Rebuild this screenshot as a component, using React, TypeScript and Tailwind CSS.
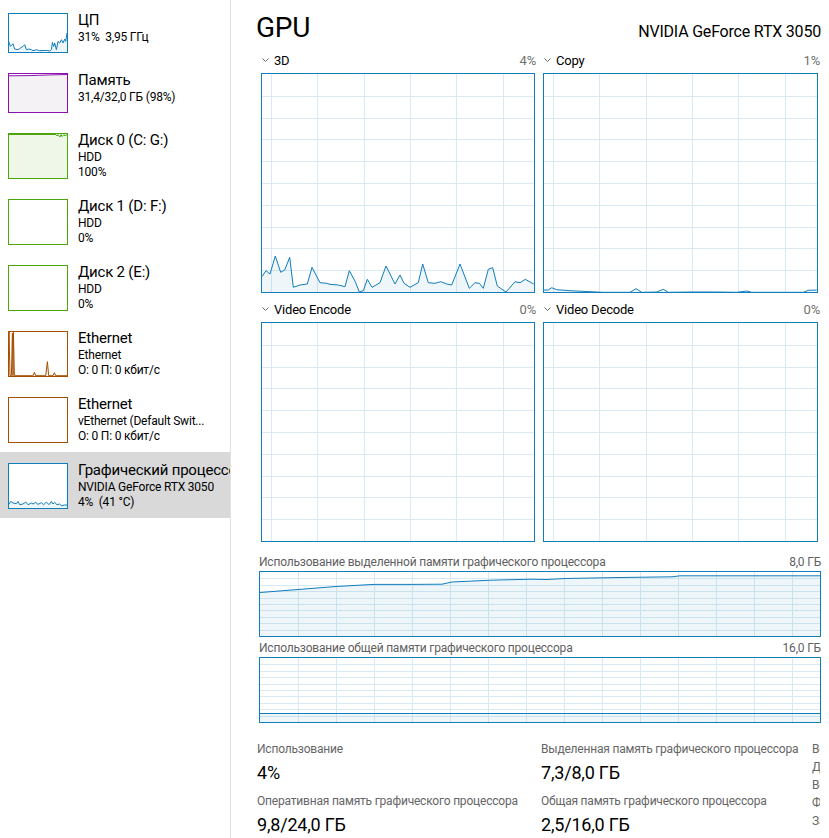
import React from 'react';
import clsx from 'clsx';

type Pt = [number, number];

const BLUE = '#117dbb';
const GRID = '#d9eaf4';

const toStr = (pts: Pt[]) => pts.map((p) => `${p[0].toFixed(1)},${p[1].toFixed(1)}`).join(' ');

// line + translucent area underneath
const Area = ({ pts, w, h, color, fill }: { pts: Pt[]; w: number; h: number; color: string; fill?: string }) => (
  <>
    <polygon points={`0,${h} ${toStr(pts)} ${w},${h}`} fill={fill ?? color} fillOpacity={fill ? 1 : 0.07} />
    <polyline points={toStr(pts)} fill="none" stroke={color} strokeWidth={1} strokeLinejoin="round" />
  </>
);

// chart with the light blue grid used on the GPU page
const Chart = ({ w, h, dx, ox, rows, pts }: { w: number; h: number; dx: number; ox: number; rows: number; pts?: Pt[] }) => {
  const vx: number[] = [];
  for (let x = ox; x < w; x += dx) vx.push(Math.round(x) + 0.5);
  const hy: number[] = [];
  for (let i = 1; i < rows; i++) hy.push(Math.round((h * i) / rows) + 0.5);
  return (
    <svg width={w} height={h} className="block">
      {vx.map((x) => (
        <line key={'v' + x} x1={x} x2={x} y1={0} y2={h} stroke={GRID} />
      ))}
      {hy.map((y) => (
        <line key={'h' + y} x1={0} x2={w} y1={y} y2={y} stroke={GRID} />
      ))}
      {pts && <Area pts={pts} w={w} h={h} color={BLUE} />}
    </svg>
  );
};

const Chevron = () => (
  <svg width="7" height="4" viewBox="0 0 7 4" className="ml-[3px] mt-[6px] shrink-0">
    <polyline points="0.5,0.5 3.5,3.5 6.5,0.5" fill="none" stroke="#6b6b6b" strokeWidth="1" />
  </svg>
);

// ---- data (traced from the screenshot) ----
const cpuPts: Pt[] = [[27,125],[32,140],[40,132],[45,148],[55,150],[62,145],[70,140],[75,135],[80,150],[88,148],[95,150],[100,153],[110,150],[120,153],[140,152],[150,154],[155,150],[158,128],[162,140],[165,130],[170,150],[175,125],[180,130],[185,120],[190,130],[195,118],[198,125],[202,100]]
  .map(([a, b]) => [a / 3 - 9.3, b / 3 - 14.3] as Pt);

const gpuThumbPts: Pt[] = [[27,555],[33,545],[40,550],[50,552],[55,545],[60,555],[70,553],[78,547],[85,555],[95,550],[100,553],[108,548],[115,554],[125,549],[132,555],[140,547],[148,555],[155,545],[160,553],[165,548],[172,555],[180,553],[185,558],[195,556],[202,556]]
  .map(([a, b]) => [a / 3 - 9.3, b / 3 - 144.3] as Pt);

const ethPts: Pt[] = [[25,167],[28,35],[31,167],[35,167],[38,40],[40,167],[41,35],[44,167],[100,167],[104,157],[108,167],[138,167],[143,125],[147,167],[160,167],[164,158],[168,167],[203,167]]
  .map(([a, b]) => [a / 3 - 9.3, b / 3 - 12] as Pt);

const memThumbPts: Pt[] = [[0, 1.8], [20, 1.6], [45, 0.8], [58, 0.5]];

const diskPts: Pt[] = [[0, 0.5], [47, 0.5], [48, 2], [49, 0.5], [51, 3], [52, 0.5], [53, 2.5], [55, 0.5], [56, 2], [58, 0.5]];

const d3Pts: Pt[] = [[35,110],[48,92],[60,102],[76,48],[92,97],[104,90],[119,52],[130,142],[150,135],[172,132],[186,82],[210,128],[230,130],[240,133],[265,135],[285,140],[298,92],[316,125],[328,156],[340,152],[352,118],[366,142],[390,128],[408,78],[435,132],[450,105],[462,130],[480,142],[505,128],[518,72],[535,128],[555,130],[572,125],[590,132],[605,135],[630,72],[658,145],[675,128],[688,130],[700,145],[715,88],[728,83],[742,138],[768,156],[795,125],[810,128],[826,118],[851,132]]
  .map(([a, b]) => [Math.max(0, a / 3 - 12), b / 3 + 166] as Pt);

const copyPts: Pt[] = [[40,150],[55,150],[65,143],[80,149],[120,152],[180,155],[220,157],[300,157],[318,146],[335,157],[380,156],[400,148],[415,157],[480,156],[560,156],[620,157],[650,153],[665,157],[735,157],[820,157],[835,151],[860,150]]
  .map(([a, b]) => [Math.max(0, a / 3 - 14), b / 3 + 166] as Pt);

const dedicatedPts: Pt[] = [[0,20.5],[38,17.5],[76,14.5],[114,12.4],[152,12.4],[182,12.2],[192,10],[231,8.2],[271,7.2],[287,7.5],[305,6.5],[360,5.5],[412,4.8],[420,3.8],[560,3.8]];

const sharedPts: Pt[] = [[0, 55.5], [560, 55.5]];

type Item = {
  title: string;
  lines: string[];
  border: string;
  color: string;
  fill?: string;
  tall: boolean;
  selected?: boolean;
  kind: 'cpu' | 'mem' | 'disk' | 'empty' | 'eth' | 'gpu';
};

const items: Item[] = [
  { title: 'ЦП', lines: ['31%  3,95 ГГц'], border: 'border-[#117dbb]', color: '#117dbb', tall: false, kind: 'cpu' },
  { title: 'Память', lines: ['31,4/32,0 ГБ (98%)'], border: 'border-[#8b12ae]', color: '#8b12ae', fill: '#f4f2f4', tall: false, kind: 'mem' },
  { title: 'Диск 0 (C: G:)', lines: ['HDD', '100%'], border: 'border-[#4da60c]', color: '#4da60c', fill: '#eff7e9', tall: true, kind: 'disk' },
  { title: 'Диск 1 (D: F:)', lines: ['HDD', '0%'], border: 'border-[#4da60c]', color: '#4da60c', tall: true, kind: 'empty' },
  { title: 'Диск 2 (E:)', lines: ['HDD', '0%'], border: 'border-[#4da60c]', color: '#4da60c', tall: true, kind: 'empty' },
  { title: 'Ethernet', lines: ['Ethernet', 'О: 0 П: 0 кбит/с'], border: 'border-[#a74f01]', color: '#a74f01', tall: true, kind: 'eth' },
  { title: 'Ethernet', lines: ['vEthernet (Default Swit...', 'О: 0 П: 0 кбит/с'], border: 'border-[#a74f01]', color: '#a74f01', tall: true, kind: 'empty' },
  { title: 'Графический процессор 0', lines: ['NVIDIA GeForce RTX 3050', '4%  (41 °C)'], border: 'border-[#117dbb]', color: '#117dbb', tall: true, selected: true, kind: 'gpu' },
];

const Thumb = ({ item }: { item: Item }) => {
  const w = 58;
  const h = item.tall ? 44 : 38;
  const pts: Record<string, Pt[] | undefined> = {
    cpu: cpuPts,
    gpu: gpuThumbPts,
    eth: ethPts,
    mem: memThumbPts,
    disk: diskPts,
  };
  const p = pts[item.kind];
  return (
    <div className={clsx('ml-[8px] mt-[11px] w-[60px] shrink-0 border bg-white', item.border, item.tall ? 'h-[46px]' : 'h-[40px]')}>
      <svg width={w} height={h} className="block">
        {p && <Area pts={p} w={w} h={h} color={item.color} fill={item.fill} />}
      </svg>
    </div>
  );
};

const SideItem = ({ item }: { item: Item }) => (
  <div className={clsx('flex', item.tall ? 'h-[66px]' : 'h-[60px]', item.selected && 'bg-[#d9d9d9]')}>
    <Thumb item={item} />
    <div className="ml-[10px] pt-[9px] whitespace-nowrap text-black">
      <div className="text-[15px] leading-[19px]">{item.title}</div>
      {item.lines.map((l, i) => (
        <div key={i} className="text-[12px] leading-[15px] whitespace-pre">
          {l}
        </div>
      ))}
    </div>
  </div>
);

const GraphCell = ({ name, value, wide, pts }: { name: string; value: string; wide?: boolean; pts?: Pt[] }) => (
  <div>
    <div className="flex h-[21px] items-start text-[13px] leading-[18px]">
      <Chevron />
      <span className="ml-[5px] text-black">{name}</span>
      <span className="ml-auto pr-[1px] text-[#707070]">{value}</span>
    </div>
    <div className={clsx('ml-[2px] h-[220px] border border-[#117dbb]', wide ? 'w-[275px]' : 'w-[274px]')}>
      <Chart w={wide ? 273 : 272} h={218} dx={46.4} ox={8.7} rows={10} pts={pts} />
    </div>
  </div>
);

const MemGraph = ({ label, value, pts }: { label: string; value: string; pts: Pt[] }) => (
  <div>
    <div className="flex h-[18px] justify-between text-[12px] leading-[18px] text-[#5f5f5f]">
      <span>{label}</span>
      <span>{value}</span>
    </div>
    <div className="h-[66px] border border-[#117dbb]">
      <Chart w={560} h={64} dx={38} ox={37.7} rows={10} pts={pts} />
    </div>
  </div>
);

const Stat = ({ label, value, first }: { label: string; value: string; first?: boolean }) => (
  <div className={first ? '' : 'mt-[8px]'}>
    <div className="text-[12px] leading-[16px] text-[#666666] whitespace-nowrap">{label}</div>
    <div className="mt-[4px] text-[18px] leading-[24px] text-black whitespace-nowrap">{value}</div>
  </div>
);

export default function App() {
  return (
    <div className="flex h-[838px] w-[829px] overflow-hidden bg-white font-['Roboto','Noto_Sans',sans-serif] tracking-[-0.2px]">
      <aside className="w-[231px] shrink-0 overflow-hidden border-r border-[#e3e3e3] pt-[2px]">
        {items.map((it, i) => (
          <SideItem key={i} item={it} />
        ))}
      </aside>

      <main className="min-w-0 flex-1 pl-[28px] pr-[8px]">
        <div className="mt-[14px] flex h-[28px] items-baseline justify-between">
          <span className="-ml-[3px] text-[28px] leading-[28px] text-black">GPU</span>
          <span className="text-[16px] leading-[20px] text-black">NVIDIA GeForce RTX 3050</span>
        </div>

        <div className="mt-[10px] grid grid-cols-[278px_280px] gap-x-[4px] gap-y-[8px]">
          <GraphCell name="3D" value="4%" pts={d3Pts} />
          <GraphCell name="Copy" value="1%" wide pts={copyPts} />
          <GraphCell name="Video Encode" value="0%" />
          <GraphCell name="Video Decode" value="0%" wide />
        </div>

        <div className="mt-[11px]">
          <MemGraph label="Использование выделенной памяти графического процессора" value="8,0 ГБ" pts={dedicatedPts} />
        </div>
        <div className="mt-[2px]">
          <MemGraph label="Использование общей памяти графического процессора" value="16,0 ГБ" pts={sharedPts} />
        </div>

        <div className="-ml-[2px] mt-[18px] grid grid-cols-[284px_271px_8px]">
          <div>
            <Stat first label="Использование" value="4%" />
            <Stat label="Оперативная память графического процессора" value="9,8/24,0 ГБ" />
          </div>
          <div>
            <Stat first label="Выделенная память графического процессора" value="7,3/8,0 ГБ" />
            <Stat label="Общая память графического процессора" value="2,5/16,0 ГБ" />
          </div>
          <div className="-mt-[1px] overflow-hidden whitespace-nowrap text-[12px] leading-[18px] text-[#666666]">
            <div>Версия драйвера:</div>
            <div>Дата разработки:</div>
            <div>Версия DirectX:</div>
            <div>Физическое расположение:</div>
            <div>Зарезервированная аппаратно память:</div>
          </div>
        </div>
      </main>
    </div>
  );
}
